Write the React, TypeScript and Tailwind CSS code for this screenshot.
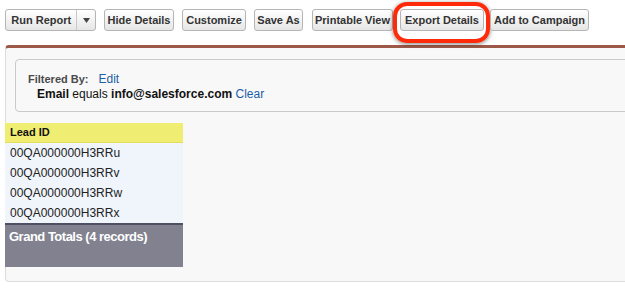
import React from 'react';

const font = { fontFamily: '"Liberation Sans", Arial, sans-serif' };

interface Btn {
  label: string;
  w: string;
  ml: string;
}

const buttons: Btn[] = [
  { label: 'Hide Details', w: 'w-[70px]', ml: 'ml-[8px]' },
  { label: 'Customize', w: 'w-[64px]', ml: 'ml-[8px]' },
  { label: 'Save As', w: 'w-[49px]', ml: 'ml-[8px]' },
  { label: 'Printable View', w: 'w-[81px]', ml: 'ml-[9px]' },
  { label: 'Export Details', w: 'w-[84px]', ml: 'ml-[7px]' },
  { label: 'Add to Campaign', w: 'w-[99px]', ml: 'ml-[6px]' },
];

const leads = ['00QA000000H3RRu', '00QA000000H3RRv', '00QA000000H3RRw', '00QA000000H3RRx'];

const btnClass =
  'h-[22px] flex items-center justify-center border border-[#b5b5b5] rounded-[3px] bg-gradient-to-b from-white to-[#e6e6e6] text-[11px] font-bold text-[#333]';

const App = () => {
  return (
    <div className="w-[625px] h-[290px] overflow-hidden bg-white" style={font}>
      {/* toolbar */}
      <div className="flex pt-[9px] pl-[5px]">
        <div className={btnClass + ' w-[91px] !justify-start'}>
          <span className="w-[72px] text-center">Run Report</span>
          <span className="w-[19px] h-full flex items-center justify-center border-l border-[#c8c8c8]">
            <svg width="7" height="5" viewBox="0 0 7 5">
              <path d="M0 0h7L3.5 5z" fill="#444" />
            </svg>
          </span>
        </div>
        {buttons.map((b) => (
          <div key={b.label} className={'relative ' + b.ml}>
            <div className={btnClass + ' ' + b.w}>{b.label}</div>
            {b.label === 'Export Details' && (
              <div className="absolute left-[-7px] top-[-7px] w-[97px] h-[41px] border-[4px] border-[#ff2a0a] rounded-[14px] shadow-[0_1px_4px_rgba(0,0,0,0.5)]" />
            )}
          </div>
        ))}
      </div>

      {/* report panel */}
      <div className="mt-[14px] ml-[5px] w-[640px] h-[237px] bg-[#f8f8f8] border border-[#dcdcdc] border-t-[3px] border-t-[#9d5948] rounded-[4px] flex flex-col">
        <div className="mt-[11px] ml-[9px] h-[53px] bg-[#f8f8f8] border border-[#c9c9c9] rounded-[4px] pl-[12px] pt-[12px]">
          <div className="flex items-baseline leading-[15px]">
            <span className="text-[11px] font-bold text-[#4a4a4a]">Filtered By:</span>
            <span className="ml-[10px] text-[12px] text-[#1b5ea6]">Edit</span>
          </div>
          <div className="ml-[9px] text-[12px] text-[#111] leading-[14px]">
            <span className="font-bold">Email</span> equals{' '}
            <span className="font-bold">info@salesforce.com</span>{' '}
            <span className="text-[#1b5ea6]">Clear</span>
          </div>
        </div>

        <div className="mt-[11px] -ml-px w-[178px]">
          <div className="h-[20px] bg-[#f0ee72] border-b border-[#e2df60] flex items-center pl-[5px] text-[11px] font-bold text-[#111]">
            Lead ID
          </div>
          {leads.map((id) => (
            <div key={id} className="h-[20px] bg-[#f0f4fb] flex items-center pl-[5px] text-[12px] text-[#222]">
              {id}
            </div>
          ))}
          <div className="h-[44px] bg-[#818190] border-t-2 border-[#4f4f63] pl-[4px] pt-[2px] text-[13px] tracking-[-0.5px] font-bold text-white">
            Grand Totals (4 records)
          </div>
        </div>
      </div>
    </div>
  );
};

export default App;
